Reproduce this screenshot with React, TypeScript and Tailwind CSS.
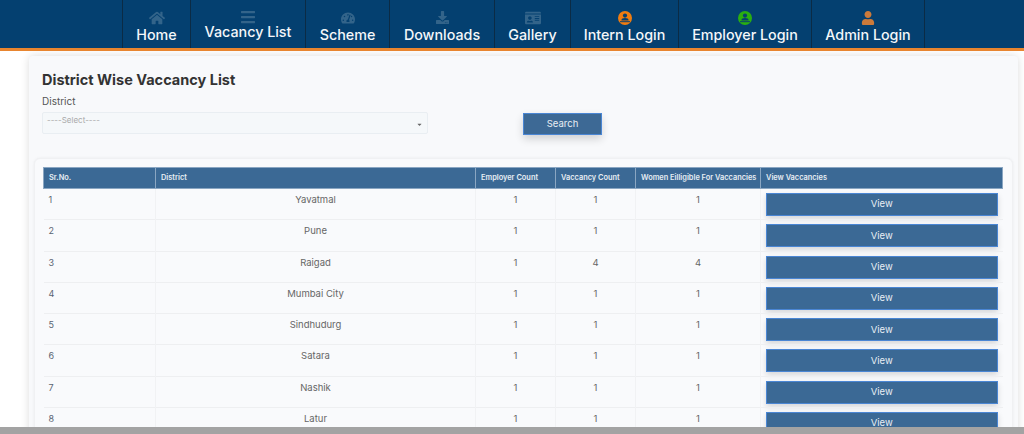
import { FaHome, FaBars, FaTachometerAlt, FaDownload, FaIdCard, FaUser, FaCaretDown } from 'react-icons/fa';
import type { ReactNode } from 'react';

const font = "font-['Inter','Liberation_Sans',sans-serif]";

function LoginIcon({ color }: { color: string }) {
  return (
    <svg width="14" height="14" viewBox="0 0 14 14">
      <circle cx="7" cy="7" r="7" fill={color} />
      <circle cx="7" cy="4.6" r="2.1" fill="#063f6e" />
      <path d="M3.4 9.4c0-1.5 1.4-2.3 3.6-2.3s3.6.8 3.6 2.3z" fill="#063f6e" />
      <rect x="2" y="10.2" width="10" height="1" fill="#063f6e" />
    </svg>
  );
}

const navItems: { label: string; w: string; icon: ReactNode; raised?: boolean }[] = [
  { label: 'Home', w: 'w-[69px]', icon: <FaHome size={16} /> },
  { label: 'Vacancy List', w: 'w-[115px]', icon: <FaBars size={16} />, raised: true },
  { label: 'Scheme', w: 'w-[84px]', icon: <FaTachometerAlt size={14} /> },
  { label: 'Downloads', w: 'w-[105px]', icon: <FaDownload size={13} /> },
  { label: 'Gallery', w: 'w-[76px]', icon: <FaIdCard size={16} /> },
  { label: 'Intern Login', w: 'w-[108px]', icon: <LoginIcon color="#f07c10" /> },
  { label: 'Employer Login', w: 'w-[133px]', icon: <LoginIcon color="#2aae10" /> },
  { label: 'Admin Login', w: 'w-[113px]', icon: <FaUser size={14} color="#cc7a3a" /> },
];

const rows = [
  ['1', 'Yavatmal', '1', '1', '1'],
  ['2', 'Pune', '1', '1', '1'],
  ['3', 'Raigad', '1', '4', '4'],
  ['4', 'Mumbai City', '1', '1', '1'],
  ['5', 'Sindhudurg', '1', '1', '1'],
  ['6', 'Satara', '1', '1', '1'],
  ['7', 'Nashik', '1', '1', '1'],
  ['8', 'Latur', '1', '1', '1'],
];

const heads = ['Sr.No.', 'District', 'Employer Count', 'Vaccancy Count', 'Women Eilligible For Vaccancies', 'View Vaccancies'];

export default function App() {
  return (
    <div className={`${font} h-[434px] w-[1024px] overflow-hidden flex flex-col bg-white`}>
      <header className="h-[51px] shrink-0 bg-[#044070] border-b-[3px] border-[#e8852f] pl-[122px] flex">
        {navItems.map((item, i) => (
          <div
            key={item.label}
            className={`${item.w} h-full flex flex-col items-center border-r border-[#0b2b45] ${i === 0 ? 'border-l' : ''} ${item.raised ? 'pt-[9px]' : 'pt-[10px]'}`}
          >
            <div className="h-[15px] flex items-center justify-center text-[#33648a]">{item.icon}</div>
            <span className={`text-[14.3px] leading-[18px] font-medium text-[#f4f7fa] whitespace-nowrap ${item.raised ? 'mt-[-1px]' : 'mt-[1px]'}`}>
              {item.label}
            </span>
          </div>
        ))}
      </header>

      <main className="flex-1 min-h-0 overflow-hidden pt-[5px] px-[29px] pr-[6px]">
        <section className="w-[989px] h-[600px] bg-[#f8f9fb] rounded-t-[4px] shadow-[0_0_8px_rgba(0,0,0,0.14)] px-[5px]">
          <div className="pl-[8px] pt-[15px]">
            <h1 className="text-[14.5px] leading-[18px] font-bold text-[#333333]">District Wise Vaccancy List</h1>
            <label className="block mt-[5px] text-[10px] leading-[14px] text-[#555555]">District</label>
            <div className="flex items-start mt-[4px]">
              <div className="w-[386px] h-[22px] bg-[#f5f8fa] border border-[#e9eef2] rounded-[2px] flex justify-between pl-[4px] pr-[4px] text-[8px] text-[#aaaaaa]">
                <span className="leading-[15px]">----Select----</span>
                <FaCaretDown size={7} className="mt-[8px] text-[#666666]" />
              </div>
              <button className="ml-[95px] mt-[1px] w-[79px] h-[22px] bg-[#3d6995] border border-[#4a86d4] text-[9.5px] text-[#e8eef4] shadow-[0_4px_8px_rgba(0,0,0,0.16)]">
                Search
              </button>
            </div>
          </div>

          <div className="mt-[23px] bg-[#f9fafc] rounded-[6px] border border-[#f0f1f3] shadow-[0_0_3px_rgba(0,0,0,0.06)] px-[8px] pt-[8px]">
            <table className="table-fixed border-collapse w-[959px]">
              <colgroup>
                <col className="w-[112px]" />
                <col className="w-[320px]" />
                <col className="w-[80px]" />
                <col className="w-[80px]" />
                <col className="w-[125px]" />
                <col className="w-[242px]" />
              </colgroup>
              <thead>
                <tr className="h-[21px] bg-[#3b6995]">
                  {heads.map((h) => (
                    <th key={h} className="border border-[#8aa6c2] p-0 pl-[5px] text-left text-[7.4px] leading-[10px] font-semibold text-[#e6edf3] whitespace-nowrap overflow-hidden">
                      {h}
                    </th>
                  ))}
                </tr>
              </thead>
              <tbody>
                {rows.map((r) => (
                  <tr key={r[0]} className="h-[31.3px] border-b border-[#eeeff1]">
                    <td className="align-top pt-[4px] pl-[5px] text-[9px] leading-[13px] text-[#5a6472] border-r border-[#f1f2f4]">{r[0]}</td>
                    {r.slice(1).map((v, i) => (
                      <td key={i} className="align-top pt-[4px] text-center text-[9.5px] leading-[13px] text-[#666666] border-r border-[#f1f2f4]">{v}</td>
                    ))}
                    <td className="align-top pt-[4px] px-[5px]">
                      <button className="block w-full h-[23px] bg-[#3b6995] border border-[#4a86d4] text-[9.5px] text-[#e8eef4] shadow-[0_3px_6px_rgba(0,0,0,0.14)]">
                        View
                      </button>
                    </td>
                  </tr>
                ))}
              </tbody>
            </table>
          </div>
        </section>
      </main>

      <div className="h-[7px] shrink-0 bg-[#a3a3a3]" />
    </div>
  );
}
